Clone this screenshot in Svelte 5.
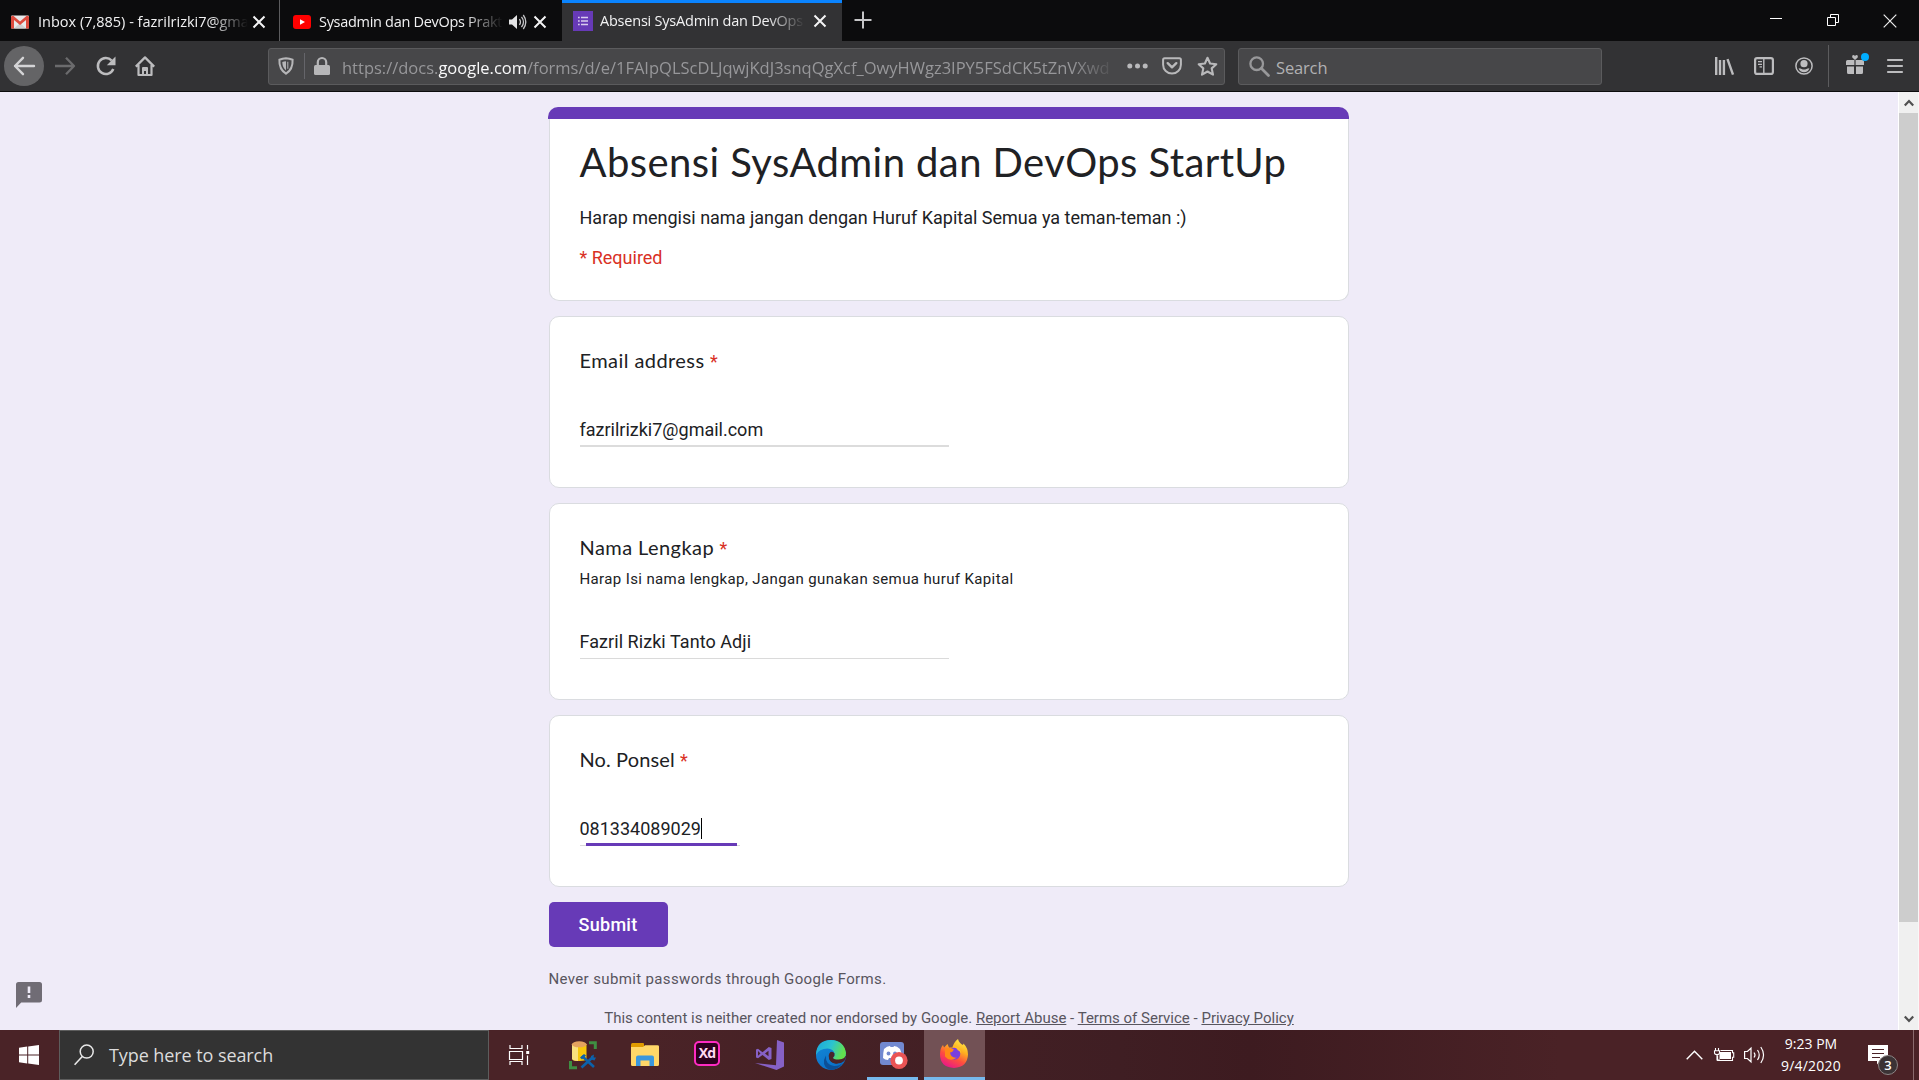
<script>
  const questions = [
    { label: 'Email address', value: 'fazrilrizki7@gmail.com', kind: 'email' },
    {
      label: 'Nama Lengkap',
      help: 'Harap Isi nama lengkap, Jangan gunakan semua huruf Kapital',
      value: 'Fazril Rizki Tanto Adji',
      kind: 'text'
    },
    { label: 'No. Ponsel', value: '081334089029', kind: 'phone' }
  ];
</script>

{#snippet closeX()}
  <svg class="x" width="14" height="14" viewBox="0 0 14 14"><path d="M1.5 1.5l11 11M12.500 1.500l-11 11" stroke="#f4f4f5" stroke-width="2" fill="none" /></svg>
{/snippet}

<div class="screen">
  <div class="tabs">
    <div class="tab t1">
      <svg width="18" height="14" viewBox="0 0 18 14"><rect x="0" y="0.500" width="18" height="13" rx="1" fill="#e9e9ea" /><path d="M3 13.500 9 8l6 5.500z" fill="#cfcfd0" /><path d="M0 1.500V13.500H3V5l6 5 6-5v8.500h3V1.500L16 .500 9 6.500 2 .500z" fill="#dd4b3e" /></svg>
      <span class="tt">Inbox (7,885) - fazrilrizki7@gma</span>
      {@render closeX()}
    </div>
    <div class="tab t2">
      <svg width="18" height="14" viewBox="0 0 18 14"><rect width="18" height="14" rx="3" fill="#f00" /><path d="M7 4.200v5.600L12 7z" fill="#fff" /></svg>
      <span class="tt">Sysadmin dan DevOps Prakt</span>
      <svg class="snd" width="18" height="16" viewBox="0 0 18 16"><path d="M0 5.500h3L8 1v14L3 10.500H0z" fill="#e4e4e5" /><path d="M10.500 5q2 3 0 6M12.500 2.800q4 5.200 0 10.400M14.300 1q5 7 0 14" fill="none" stroke="#c4c4c6" stroke-width="1.300" /></svg>
      {@render closeX()}
    </div>
    <div class="tab t3">
      <svg width="20" height="20" viewBox="0 0 20 20"><rect width="20" height="20" fill="#673ab7" /><path d="M5 6.500h1.700M5 10h1.700M5 13.500h1.700M8 6.500h7M8 10h7M8 13.500h7" stroke="#d9cdee" stroke-width="1.500" /></svg>
      <span class="tt">Absensi SysAdmin dan DevOps</span>
      {@render closeX()}
    </div>
    <svg class="plus" width="18" height="18" viewBox="0 0 18 18"><path d="M9 0.500v17M.500 9h17" stroke="#c6c6c8" stroke-width="2" /></svg>
    <div class="win">
      <svg width="12" height="14" viewBox="0 0 12 14"><path d="M0 6.500h12" stroke="#fff" /></svg>
      <svg width="12" height="12" viewBox="0 0 12 12"><path d="M.500 3.500h8v8h-8zM3.500 3.500v-3h8v8h-3" fill="none" stroke="#fff" /></svg>
      <svg width="14" height="14" viewBox="0 0 14 14"><path d="M.700.700l12.600 12.600M13.300.700.700 13.300" stroke="#eee" stroke-width="1.200" /></svg>
    </div>
  </div>

  <div class="nav">
    <div class="back"><svg width="22" height="20" viewBox="0 0 22 20"><path d="M21 10H2M10 1.800 2 10l8 8.200" fill="none" stroke="#d4d4d6" stroke-width="2.400" stroke-linecap="round" stroke-linejoin="round" /></svg></div>
    <svg class="fwd" width="21" height="20" viewBox="0 0 21 20"><path d="M0 10h19M11 1.800 19 10l-8 8.200" fill="none" stroke="#6b6b6d" stroke-width="2.300" stroke-linejoin="round" /></svg>
    <svg class="rel" width="20" height="20" viewBox="0 0 20 20"><path d="M17.300 13A8 8 0 1 1 15.700 4.500" fill="none" stroke="#bcbcbe" stroke-width="2.500" /><path d="M19.500 0.500v8.700h-8.700z" fill="#bcbcbe" /></svg>
    <svg class="home" width="20" height="20" viewBox="0 0 20 20"><path d="M.800 10.600 10 1.400l9.200 9.200M3.500 9v10h13V9" fill="none" stroke="#bcbcbe" stroke-width="2.200" stroke-linejoin="round" /><path d="M7 18.500V12q0-1 1-1h4q1 0 1 1v6.500h-2V15H9v3.500z" fill="#bcbcbe" /></svg>

    <div class="urlbar">
      <svg width="16" height="18" viewBox="0 0 16 18"><path d="M8 1.200q3.500.300 6.600 1.500.500 9.500-6.600 14-7.100-4.500-6.600-14Q4.500 1.500 8 1.200z" fill="none" stroke="#b6b6b8" stroke-width="2" /><path d="M8 4.200q-1.900.100-3.700.700.100 5.500 3.700 8.500z" fill="#b6b6b8" /><path d="M9.800 4.800v7" stroke="#b6b6b8" stroke-width="1" /></svg>
      <i class="div"></i>
      <svg width="16" height="18" viewBox="0 0 16 18"><path d="M3.800 9V5.200a4.200 4.200 0 0 1 8.400 0V9" fill="none" stroke="#b6b6b8" stroke-width="2.200" /><rect y="8" width="16" height="10" rx="1.500" fill="#b6b6b8" /></svg>
      <span class="url">https://docs.<b>google.com</b>/forms/d/e/1FAIpQLScDLJqwjKdJ3snqQgXcf_OwyHWgz3IPY5FSdCK5tZnVXwd</span>
      <svg class="dots" width="21" height="6" viewBox="0 0 21 6"><g fill="#b9b9bb"><circle cx="2.800" cy="3" r="2.500" /><circle cx="10.500" cy="3" r="2.500" /><circle cx="18.200" cy="3" r="2.500" /></g></svg>
      <svg class="pocket" width="20" height="18" viewBox="0 0 20 18"><path d="M2.600 1.200h14.800q1.500 0 1.500 1.500v5a8.900 8.900 0 0 1-17.800 0v-5q0-1.500 1.500-1.500z" fill="none" stroke="#b9b9bb" stroke-width="2" /><path d="m5.700 6.200 4.300 4.100 4.300-4.100" fill="none" stroke="#b9b9bb" stroke-width="2.400" stroke-linecap="round" stroke-linejoin="round" /></svg>
      <svg class="star" width="21" height="21" viewBox="0 0 21 21"><path d="m10.500 1.800 2.600 5.700 6.200.700-4.600 4.200 1.300 6.300-5.500-3.200L5 18.700l1.300-6.300L1.700 8.200l6.200-.700z" fill="none" stroke="#b9b9bb" stroke-width="2.100" stroke-linejoin="round" /></svg>
    </div>

    <div class="searchbar">
      <svg width="21" height="21" viewBox="0 0 21 21"><circle cx="7.700" cy="7.700" r="6.300" fill="none" stroke="#98989a" stroke-width="2.300" /><path d="m12.500 12.500 7 7" stroke="#98989a" stroke-width="2.800" stroke-linecap="round" /></svg>
      <span>Search</span>
    </div>

    <div class="tools">
      <svg class="lib" width="19" height="18" viewBox="0 0 19 18"><path d="M1.200 0v18M5 3v15M8.900 3v15M12.500 2.200 18 17.600" fill="none" stroke="#bcbcbe" stroke-width="2.400" /></svg>
      <svg class="side" width="20" height="18" viewBox="0 0 20 18"><rect x="1.100" y="1.100" width="17.800" height="15.800" rx="2" fill="none" stroke="#bcbcbe" stroke-width="2.200" /><path d="M9.800 1v16" stroke="#bcbcbe" stroke-width="1.400" /><path d="M4 4.700h4M4 7.300h4M5.500 9.900h2.500" stroke="#bcbcbe" stroke-width="1.300" /></svg>
      <svg class="acc" width="18" height="18" viewBox="0 0 18 18"><circle cx="9" cy="9" r="8.100" fill="none" stroke="#bcbcbe" stroke-width="1.500" /><circle cx="9" cy="6.700" r="3.600" fill="#bcbcbe" /><path d="M3.600 11.300q2 0 3 .600 2.400 1 4.800 0 1-.600 3-.600-1.200 4-5.400 4t-5.400-4z" fill="#bcbcbe" /></svg>
      <i class="sep"></i>
      <svg class="gift" width="24" height="24" viewBox="0 0 24 24"><path d="M0 9.500q0-1.500 1.500-1.500H8.400v5H0zM9.600 8h6.900Q18 8 18 9.500V13H9.600zM1 14.500h7v7.500H2.500Q1 22 1 20.500zM10 14.500h7v6q0 1.500-1.500 1.500H10z" fill="#bcbcbe" /><path d="M9 8 6.300 5.400Q5.500 3.400 7.300 3 8.600 3 9 4.200 9.400 3 10.700 3q1.800.400 1 2.400z" fill="#bcbcbe" /><circle cx="19" cy="5" r="4" fill="#00aeff" /></svg>
      <svg class="ham" width="16" height="16" viewBox="0 0 16 16"><path d="M1 2h14M1 8h14M1 14h14" stroke="#bcbcbe" stroke-width="2.200" stroke-linecap="round" /></svg>
    </div>
  </div>

  <div class="page">
    <main>
      <section class="card head">
        <div class="bar"></div>
        <h1>Absensi SysAdmin dan DevOps StartUp</h1>
        <p class="desc">Harap mengisi nama jangan dengan Huruf Kapital Semua ya teman-teman :)</p>
        <p class="req">* Required</p>
      </section>

      {#each questions as q}
        <section class="card q {q.kind}">
          <h2>{q.label} <em>*</em></h2>
          {#if q.help}<p class="help">{q.help}</p>{/if}
          <div class="input">
            <span>{q.value}</span>{#if q.kind === 'phone'}<i class="caret"></i><i class="focus"></i>{/if}
          </div>
        </section>
      {/each}

      <button>Submit</button>
      <p class="never">Never submit passwords through Google Forms.</p>
      <p class="legal">This content is neither created nor endorsed by Google. <u>Report Abuse</u> - <u>Terms of Service</u> - <u>Privacy Policy</u></p>
    </main>

    <svg class="feedback" width="26" height="26" viewBox="0 0 26 26"><path d="M2.500 0h21Q26 0 26 2.500v15.500q0 2.500-2.500 2.500H5.200L0 26V2.500Q0 0 2.500 0z" fill="#706c75" /><path d="M11.700 4.500h2.600v6.500h-2.600zM11.700 13h2.600v3h-2.600z" fill="#efebf8" /></svg>

    <div class="scroll">
      <svg width="10" height="8" viewBox="0 0 10 8"><path d="M.800 6.500 5 2l4.200 4.500" fill="none" stroke="#505050" stroke-width="2.200" /></svg>
      <div class="thumb"></div>
      <svg class="down" width="10" height="8" viewBox="0 0 10 8"><path d="M.800 1.500 5 6l4.200-4.500" fill="none" stroke="#505050" stroke-width="2.200" /></svg>
    </div>
  </div>

  <div class="taskbar">
    <div class="start"><svg width="20" height="20" viewBox="0 0 20 20"><path d="M0 2.800 8.200 1.600v7.900H0zM9.200 1.400 20 0v9.500H9.200zM0 10.500h8.200v7.900L0 17.200zM9.200 10.500H20V20L9.200 18.600z" fill="#fff" /></svg></div>
    <div class="find">
      <svg width="20" height="22" viewBox="0 0 20 22"><circle cx="12.700" cy="7.600" r="6.500" fill="none" stroke="#e8e8e8" stroke-width="1.500" /><path d="M8.300 12.500.600 20.800" stroke="#e8e8e8" stroke-width="1.600" /></svg>
      <span>Type here to search</span>
    </div>
    <div class="app a0"><svg width="22" height="20" viewBox="0 0 22 20"><path d="M1 0v3.500h12V0M.500 6.500h13v8h-13zM1 20v-3.500h12V20M18.500 0v4.500M18.500 10.500V20" fill="none" stroke="#fff" stroke-width="1.200" /><rect x="17.200" y="6" width="3" height="3" fill="#fff" /></svg></div>
    <div class="app a1"><svg width="28" height="29" viewBox="0 0 28 29"><path d="M20 1.700h6.300V8M1.500 20v6.700H8" fill="none" stroke="#3f8f42" stroke-width="3" /><path d="M3 3v14.500q0 2.500 7 2.500t7.500-2.500V3z" fill="#f7c80c" /><path d="M3 3v14.500q0 2.300 6 2.500V3z" fill="#fbe27d" /><ellipse cx="10.200" cy="3.300" rx="7.300" ry="3" fill="#e5a35f" /><path d="m13 15 12 11M24 16 12.500 26.500" stroke="#0c62ab" stroke-width="2.600" /><path d="M11 16.500 15 13l2 1.500-4 4zM22 15l3-1.500-.500 3 2.500 0-1.500 3-3.500-1z" fill="#0c62ab" /></svg></div>
    <div class="app a2"><svg width="28" height="24" viewBox="0 0 28 24"><path d="M0 1.500Q0 0 1.500 0H12q1 0 1 1v3H0z" fill="#e09b00" /><path d="M0 4h12l2-1.800h12.500Q28 2.200 28 3.500V21.500Q28 23 26.500 23h-25Q0 23 0 21.500z" fill="#ffd768" /><path d="M5 23v-8.500q0-2 2-2h14q2 0 2 2V23h-4.500v-5.500h-9V23z" fill="#3a97dd" /></svg></div>
    <div class="app a3"><div class="xd">Xd</div></div>
    <div class="app a4"><svg width="29" height="30" viewBox="0 0 29 30"><path d="M22 0l7 2.500v24L21.500 30 0 23l21 2.300z" fill="#8661c5" /><path d="M1 9.500 3 8.700l4.500 3.500L13.800 7 16.500 8v11l-2.700 1L7.500 15 3 18.300 1 17.500zM3 11v4.800L5.500 13.500zM13.500 10.700 10 13.600l3.500 2.700z" fill="#8661c5" fill-rule="evenodd" /></svg></div>
    <div class="app a5"><svg width="30" height="30" viewBox="0 0 30 30"><defs><linearGradient id="e1" x1="0" y1="0" x2="1" y2="0.300"><stop offset="0" stop-color="#1aa5dd" /><stop offset=".55" stop-color="#2cc3d0" /><stop offset="1" stop-color="#62e04e" /></linearGradient><linearGradient id="e2" x1="0" y1="0" x2="0.600" y2="1"><stop offset="0" stop-color="#1389d8" /><stop offset="1" stop-color="#0b70c8" /></linearGradient></defs><circle cx="15" cy="15" r="15" fill="url(#e2)" /><path d="M10 15.500q-1 9 8 10.500 5 .500 9-3.500Q22 30 15 30 7 28 8 20z" fill="#0c4f96" /><path d="M13 17.500q.500 5.500 7 6 5 .300 8.300-2.500Q30 18 30 16h-3z" fill="#4a2429" /><path d="M0 14Q1 0 15 0q13 .500 15 13 0 6.500-7.500 6.500-5.500 0-5.500-2 2-1.500 1.500-4Q17.500 9 11.500 8.500 3 8.500 0 15z" fill="url(#e1)" /><path d="M17 17.500q2-2 1.500-4-1.500-2.500-4-1.500-3 2.500-1 7.500 3 4.500 9 4.200-6-1.700-5.500-6.200z" fill="#4a2429" /></svg></div>
    <div class="app a6 run"><svg width="29" height="30" viewBox="0 0 29 30"><rect x="1" y="3" width="24" height="23" rx="3" fill="#7289d0" /><path d="M5 10q3-3 6-3l.500 1h3l.500-1q3 0 6 3 2 4 2 9-2 2-5 2l-1-2h-7l-1 2q-3 0-5-2 0-5 1-9z" fill="#fff" /><circle cx="9.500" cy="14.500" r="1.900" fill="#7289d0" /><circle cx="16" cy="14.500" r="1.900" fill="#7289d0" /><circle cx="20" cy="21.500" r="8.600" fill="#ea5455" /><circle cx="20" cy="21.500" r="3.900" fill="#fff" /></svg></div>
    <div class="app a7 run active"><svg width="28" height="29" viewBox="0 0 28 29"><defs><linearGradient id="f1" x1=".8" y1="0" x2=".3" y2="1"><stop offset="0" stop-color="#fff14d" /><stop offset=".35" stop-color="#ffb01f" /><stop offset=".65" stop-color="#ff4f3d" /><stop offset="1" stop-color="#e8168b" /></linearGradient></defs><path d="M14 29Q0 28 0 15.500 0 9 3 6l1 2.500L7.500 5 9 8.500h3.500q1-5 5.500-8.500 1 4 5 6l.500-1.500Q28 9 28 15.500 27.500 28 14 29z" fill="url(#f1)" /><circle cx="14.300" cy="14.800" r="6" fill="#7a3fe0" /><path d="M5 10q5-1.500 9 .500-1 2.500-4 3 1 6 7 5-7 5-12-1z" fill="#ff8a16" /><path d="M12 7q8 0 9.500 8-1-3-4-4 0-2-5.500-4z" fill="#ffc12b" /></svg></div>

    <div class="tray">
      <svg class="up" width="17" height="10" viewBox="0 0 17 10"><path d="m.700 9.300 7.800-8 7.800 8" fill="none" stroke="#fff" stroke-width="1.400" /></svg>
      <svg class="bat" width="20" height="14" viewBox="0 0 20 14"><path d="M1.500 0v2.500M4.500 0v2.500M.500 2.700h5v2Q5.500 6.500 3 6.500T.500 4.700zM3 6.500V12h3" fill="none" stroke="#fff" stroke-width="1.100" /><path d="M6.500 2.500h12v2.300h1.200v4.500h-1.200v3.200H3.600V7.500" fill="none" stroke="#fff" stroke-width="1.100" /><rect x="5.500" y="4" width="11.500" height="7" fill="#fff" /></svg>
      <svg class="vol" width="21" height="18" viewBox="0 0 21 18"><path d="M.600 5.500h2.800L7 2.200v13.600L3.400 12.500H.600z" fill="none" stroke="#fff" stroke-width="1.200" /><path d="M10 6.500q2 2.500 0 5M13.500 4q3.500 5 0 10M16.800 1q5.500 8 0 16" fill="none" stroke="#fff" stroke-width="1.200" /></svg>
      <div class="clock"><span>9:23 PM</span><span class="d">9/4/2020</span></div>
      <div class="note">
        <svg width="20" height="20" viewBox="0 0 20 20"><path d="M0 0h20v16h-8l-3 3.500V16H0z" fill="#fff" /><path d="M4 4.500h12M4 8.500h12M4 12.500h8" stroke="#4a2226" stroke-width="1.200" /></svg>
        <span>3</span>
      </div>
      <i class="desk"></i>
    </div>
  </div>
</div>

<style>
  :global(body) { margin: 0; overflow: hidden; }
  .screen { width: 1919px; height: 1080px; display: flex; flex-direction: column; overflow: hidden; font-family: Roboto, sans-serif; }
  svg { display: block; flex: none; overflow: visible; }
  h1, h2, p { margin: 0; font-weight: 400; }
  i { display: block; flex: none; }

  .tabs { height: 41px; background: #0c0c0d; display: flex; flex: none; font: 14.5px "Open Sans", sans-serif; color: #f2f2f3; }
  .tab { box-sizing: border-box; display: flex; align-items: center; height: 41px; flex: none; }
  .t1 { width: 280px; padding: 2px 0 0 11px; border-right: 1px solid #5c5c5e; }
  .t2 { width: 282px; padding: 2px 0 0 13px; letter-spacing: -.3px; }
  .t3 { width: 280px; padding: 0 0 2px 11px; border-top: 3px solid #0a84ff; background: #323234; letter-spacing: -.22px; }
  .tt { white-space: nowrap; height: 24px; line-height: 24px; flex: none; -webkit-mask-image: linear-gradient(90deg, #000 calc(100% - 38px), transparent); mask-image: linear-gradient(90deg, #000 calc(100% - 38px), transparent); }
  .t1 .tt { width: 210px; margin: 0 4px 0 9px; }
  .t2 .tt { width: 184px; margin: 0 6px 0 8px; }
  .t2 .snd { margin-right: 6px; }
  .t3 .tt { width: 205px; margin: 0 8px 0 7px; }
  .plus { margin: 11px 0 0 12px; }
  .win { margin-left: auto; display: flex; gap: 44px; padding: 14px 22px 0 0; }
  .win svg:first-child { margin: -2px 1px 0 0; }

  .nav { height: 51px; box-sizing: border-box; background: #323234; border-bottom: 1px solid #0c0c0d; display: flex; align-items: center; flex: none; }
  .back { width: 40px; height: 40px; border-radius: 50%; background: #646466; display: flex; align-items: center; justify-content: center; margin-left: 4px; flex: none; }
  .fwd { margin-left: 11px; }
  .rel { margin-left: 20px; }
  .home { margin-left: 19px; }
  .urlbar, .searchbar { box-sizing: border-box; height: 37px; background: #474749; border: 1px solid #5b5b5d; border-radius: 3px; display: flex; align-items: center; font: 16.5px "Open Sans", sans-serif; flex: none; }
  .urlbar { width: 957px; margin-left: 113px; padding-left: 9px; }
  .div { width: 1px; height: 26px; background: #65656a; margin: 0 9px 0 10px; }
  .url { width: 775px; margin-left: 12px; padding-top: 3px; color: #97979a; white-space: nowrap; line-height: 28px; height: 28px; flex: none; -webkit-mask-image: linear-gradient(90deg, #000 calc(100% - 46px), transparent); mask-image: linear-gradient(90deg, #000 calc(100% - 46px), transparent); }
  .url b { font-weight: 400; color: #f9f9fa; }
  .dots { margin-left: 10px; }
  .pocket { margin-left: 14px; }
  .star { margin-left: 15px; }
  .searchbar { width: 364px; margin-left: 13px; padding-left: 10px; gap: 6px; color: #b1b1b3; }
  .searchbar span { line-height: 28px; padding-top: 3px; letter-spacing: -.15px; }
  .tools { display: flex; align-items: center; margin-left: 113px; }
  .side { margin-left: 20px; }
  .acc { margin-left: 21px; }
  .sep { width: 1px; height: 42px; background: #5c5c5e; margin-left: 15px; }
  .gift { margin: -5px 0 0 17px; }
  .ham { margin-left: 17px; }

  .page { height: 938px; background: #efebf8; position: relative; overflow: hidden; flex: none; display: flex; }
  main { width: 800px; margin-left: 549px; padding-top: 15px; flex: none; color: #202124; }
  .card { box-sizing: border-box; width: 800px; background: #fff; border: 1px solid #dadce0; border-radius: 10px; margin-bottom: 15px; padding: 28px 30px 0 29.5px; }
  .head { height: 194px; border-top: 0; padding-top: 0; }
  .bar { height: 12px; background: #673ab7; border-radius: 10px 10px 0 0; margin: 0 -31px 0 -31.5px; }
  h1 { font: 40px/49px Lato, sans-serif; letter-spacing: .42px; padding-top: 19px; white-space: nowrap; }
  .desc { font-size: 18px; line-height: 24px; margin-top: 19px; }
  .req { font-size: 18px; line-height: 24px; margin-top: 16px; color: #d93025; }
  .q { height: 172px; }
  .q.text { height: 197px; }
  h2 { font: 20px/30px Lato, sans-serif; height: 30px; letter-spacing: .43px; white-space: nowrap; }
  .phone h2 { letter-spacing: .12px; }
  h2 em { font-style: normal; color: #d93025; font-family: Roboto, sans-serif; letter-spacing: 0; font-size: 18px; line-height: 0; }
  .help { font-size: 15px; line-height: 20px; letter-spacing: .376px; margin-top: 7px; }
  .input { position: relative; width: 369px; height: 28px; margin-top: 43px; border-bottom: 1px solid #dadada; display: flex; font-size: 18px; line-height: 24px; }
  .email .input { height: 27px; border-bottom: 2px solid #dcdcdc; }
  .text .input { margin-top: 41px; letter-spacing: .06px; }
  .phone .input { width: 160px; }
  .caret { width: 1px; height: 21px; background: #000; margin: 1px 0 0 0; }
  .focus { position: absolute; left: 6px; bottom: -1px; width: 151px; height: 3px; background: #673ab7; }
  button { display: block; width: 119px; height: 45px; border: 0; border-radius: 5px; background: #673ab7; color: #fff; padding: 0 1px 1px 0; font: 500 18px Roboto, sans-serif; letter-spacing: .3px; }
  .never { margin-top: 22px; font-size: 15px; line-height: 20px; letter-spacing: .36px; color: #58555e; text-indent: -.5px; }
  .legal { margin-top: 19px; font-size: 15px; line-height: 20px; text-align: center; white-space: nowrap; color: #58555e; }
  .feedback { position: absolute; left: 16px; top: 890px; }
  .scroll { margin-left: auto; width: 19px; height: 938px; border-left: 1px solid #fff; border-right: 1px solid #f8f8f8; background: #f0f0f0; display: flex; flex-direction: column; align-items: center; padding-top: 7px; box-sizing: content-box; }
  .thumb { width: 19px; height: 809px; background: #cdcdcd; margin: 6px 0 93px; flex: none; }

  .taskbar { height: 50px; flex: none; display: flex; background: linear-gradient(90deg, #4a2327 0, #4a2327 640px, #3f1e23 1120px, #3d1b20 1250px, #4a2226 1560px, #4a2226 100%); color: #fff; font-family: "Open Sans", sans-serif; }
  .start { width: 59px; display: flex; align-items: center; padding-left: 19px; box-sizing: border-box; flex: none; }
  .find { width: 430px; height: 50px; box-sizing: border-box; background: #333; border: 1px solid #5d5d5d; display: flex; align-items: center; padding-left: 14px; gap: 15px; flex: none; font-size: 18px; color: #dcdcdc; }
  .find span { letter-spacing: -.08px; line-height: 28px; margin-top: -1px; }
  .app { width: 61px; height: 50px; box-sizing: border-box; display: flex; align-items: center; justify-content: center; flex: none; }
  .a0 { width: 60px; padding-left: 2px; }
  .a1 { width: 67px; }
  .a2 { width: 58px; }
  .a3 { width: 66px; }
  .a4 { width: 59px; }
  .a5 { width: 64px; }
  .a6 { width: 51px; margin-left: 4px; padding-left: 2px; }
  .a7 { margin-left: 6px; padding-right: 1px; }
  .run { border-bottom: 3px solid #76b9ed; }
  .active { background: #725155; }
  .xd { box-sizing: border-box; width: 26px; height: 25px; border: 2px solid #ff2bc2; border-radius: 5px; background: #2e001e; color: #ffd9f2; font: 700 14px/20px "Open Sans", sans-serif; text-align: center; letter-spacing: -.8px; margin-top: -3px; }
  .tray { margin-left: auto; display: flex; align-items: center; height: 50px; }
  .bat { margin-left: 11px; }
  .vol { margin-left: 10px; }
  .clock { width: 64px; margin-left: 14px; display: flex; flex-direction: column; align-items: center; font-size: 14px; line-height: 22.500px; }
  .clock .d { letter-spacing: .2px; }
  .note { position: relative; margin-left: 25px; }
  .note span { position: absolute; left: 10px; top: 10px; width: 18px; height: 18px; border: 1px solid #8c8585; border-radius: 50%; background: #3b3335; font: 600 13px/18px "Open Sans", sans-serif; text-align: center; }
  .desk { width: 1px; height: 50px; background: #8a6a6d; margin: 0 5px 0 25px; }
</style>
